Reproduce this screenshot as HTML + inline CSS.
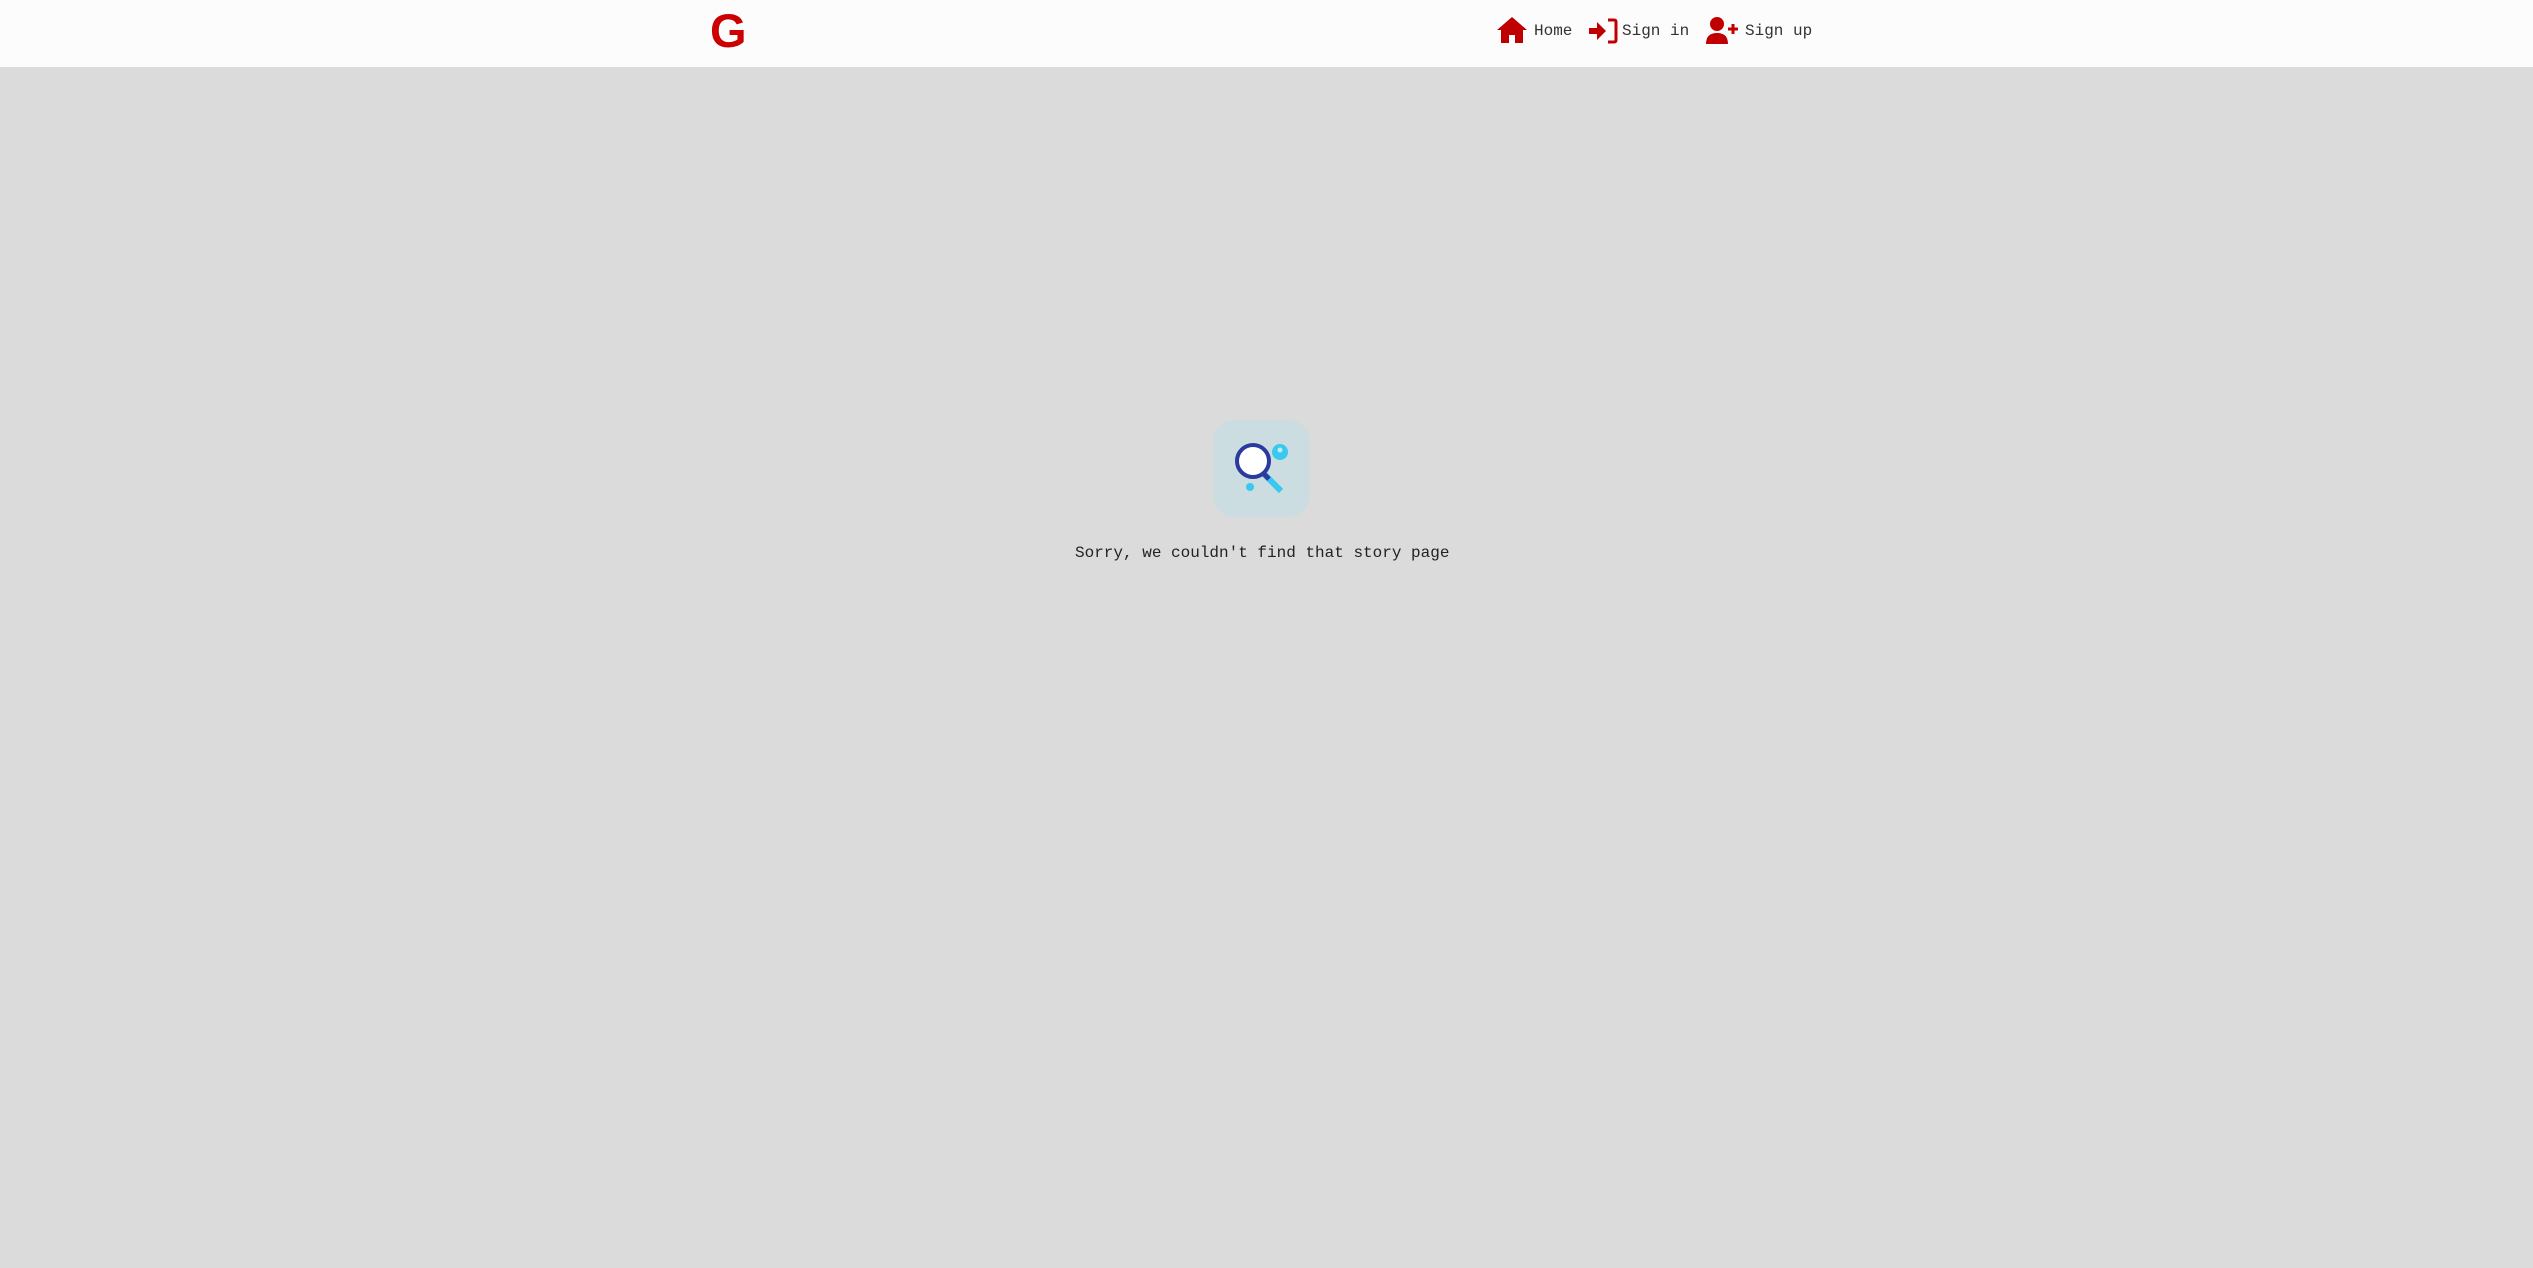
<!DOCTYPE html>
<html><head><meta charset="utf-8"><style>
html,body{margin:0;padding:0;width:2533px;height:1268px;background:#dbdbdb;font-family:"Liberation Mono",monospace;overflow:hidden}
.hdr{position:absolute;left:0;top:0;width:2533px;height:67px;background:#fcfcfc}
.g{position:absolute;left:710px;top:4px;font-family:"Liberation Sans",sans-serif;font-weight:bold;font-size:47px;color:#cc0000;line-height:54px}
.t{position:absolute;top:21px;font-size:16px;color:#333;line-height:20px}
.msg{position:absolute;left:1075px;top:543px;font-size:16px;color:#222;line-height:20px}
</style></head><body>
<div class="hdr">
<div class="g">G</div>
<svg style="position:absolute;left:1496px;top:16px" width="32" height="28" viewBox="0 0 32 28"><path d="M16 1 L31 14 L27 14 L27 27 L19 27 L19 19 L13 19 L13 27 L5 27 L5 14 L1 14 Z" fill="#c00000"/></svg>
<div class="t" style="left:1534px">Home</div>
<svg style="position:absolute;left:1588px;top:17px" width="30" height="28" viewBox="0 0 30 28"><path d="M1 11 H9 V5 L18 14 L9 23 V17 H1 Z" fill="#c00000"/><path d="M20 3 H26 Q28 3 28 5 V23 Q28 25 26 25 H20" fill="none" stroke="#c00000" stroke-width="3"/></svg>
<div class="t" style="left:1622px">Sign in</div>
<svg style="position:absolute;left:1705px;top:16px" width="36" height="30" viewBox="0 0 36 30"><circle cx="12" cy="8" r="7" fill="#c00000"/><path d="M1 28 Q1 17 12 17 Q23 17 23 28 Z" fill="#c00000"/><path d="M28 8 V18 M23 13 H33" stroke="#c00000" stroke-width="3"/></svg>
<div class="t" style="left:1745px">Sign up</div>
</div>
<svg style="position:absolute;left:1213px;top:420px" width="97" height="97" viewBox="0 0 97 97">
<rect width="97" height="97" rx="22" fill="#cbdde0"/>
<line x1="50" y1="53" x2="68" y2="71" stroke="#38c8f0" stroke-width="6"/>
<line x1="48" y1="51" x2="56" y2="59" stroke="#2b3a9e" stroke-width="5"/>
<circle cx="40" cy="41" r="16" fill="#fff" stroke="#2b3a9e" stroke-width="4"/>
<circle cx="67" cy="32" r="8" fill="#38c8f0"/><circle cx="67" cy="30" r="2.5" fill="#cbe8f0"/>
<circle cx="37" cy="67" r="4" fill="#38c8f0"/>
</svg>
<div class="msg">Sorry, we couldn't find that story page</div>
</body></html>
